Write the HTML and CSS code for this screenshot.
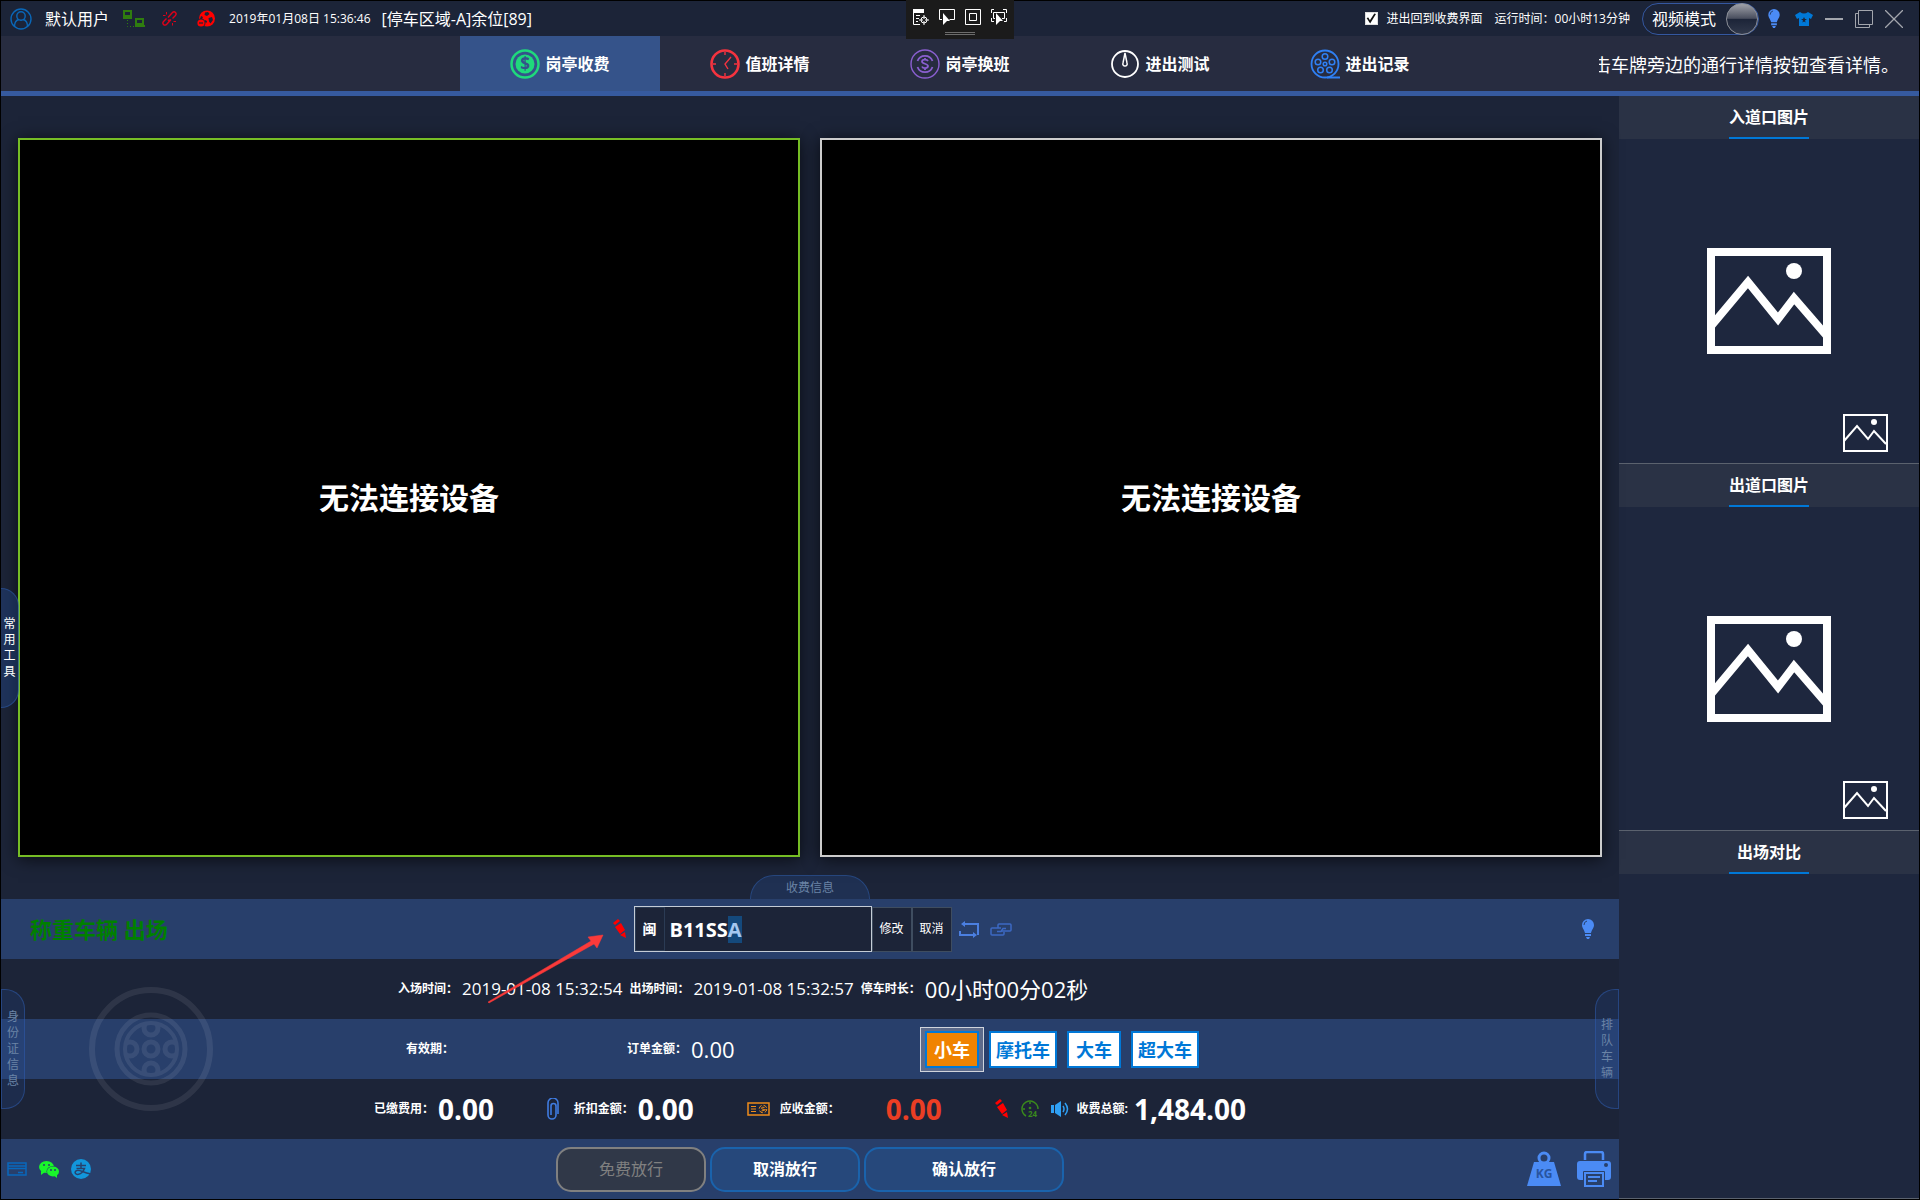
FILE: index.html
```html
<!DOCTYPE html>
<html lang="zh-CN">
<head>
<meta charset="utf-8">
<meta name="viewport" content="width=device-width, initial-scale=1">
<title>岗亭收费</title>
<link rel="stylesheet" href="styles.css">
</head>
<body>
<svg class="sprite" aria-hidden="true">
  <symbol id="pencil" viewBox="0 0 14 20">
    <path fill="red" d="M0 4 5 0 7 2 2 6zM2 8 8 4 12 11 7 15zM7 16 12 13 13 19z"/>
  </symbol>
  <symbol id="bulb" viewBox="0 0 14 20">
    <path fill="#4b8bf5" d="M7 0a6 6 0 0 1 6 6c0 3-2 4-3 8H4C3 10 1 9 1 6a6 6 0 0 1 6-6zM4 15h6v2H4zM5 18h4l-1 2H6z"/>
    <path fill="none" stroke="#28406b" d="M3 6a4 4 0 0 1 3-4"/>
  </symbol>
  <symbol id="picture" viewBox="0 0 124 106">
    <g fill="none" stroke="#fff" stroke-width="8"><path d="M4 4h116v98H4z"/><path d="M5 77 41 34 71 71 87 50 119 87"/></g>
    <circle cx="87" cy="23" r="8" fill="#fff"/>
  </symbol>
  <symbol id="picture-small" viewBox="0 0 45 38">
    <g fill="none" stroke="#fff" stroke-width="2"><path d="M1 1h43v36H1z"/><path d="M1 27 14 12 25 25 31 17 43 30"/></g>
    <circle cx="31" cy="8" r="3" fill="#fff"/>
  </symbol>
</svg>

<div class="window">
  <header class="titlebar">
    <div class="title-left">
      <svg class="ico-user" width="22" height="22" viewBox="0 0 22 22" fill="none" stroke="#0a67b8" stroke-width="1.4"><circle cx="11" cy="11" r="10"/><circle cx="11" cy="8" r="4.2"/><path d="M4.500 18.500c0-4 2-6.500 4.500-7M17.500 18.500c0-4-2-6.500-4.500-7"/></svg>
      <span class="text-lg">默认用户</span>
      <svg width="23" height="18" viewBox="0 0 23 18" fill="none" stroke="#2f7d0f" stroke-width="2"><path d="M2 1h7v5H2zM1 8h9M14 9h7v5h-7zM13 16h10"/><path stroke-dasharray="1 2" stroke-width="1" d="M5.500 10v6.500H12"/></svg>
      <svg class="ico-chain" width="15" height="15" viewBox="0 0 15 15" fill="none" stroke="#e00019" stroke-width="1.400"><path d="M6 6.500 10 2q2-2 3.500-.5T13 5l-2.500 2.500M9 8.500 5 13q-2 2-3.500.5T2 10l2.500-2.500M6 10l1.500-1.500"/><path stroke-width="1" d="M4.500 1v2.500M1 4.500h2.500M11.500 10.500H14M10.500 12v2.500"/></svg>
      <svg class="ico-globe" width="18" height="18" viewBox="0 0 18 18"><circle cx="10" cy="8.500" r="8" fill="red"/><path fill="#1c2438" d="M8 2.500 11 2l1.500 2L10 6 7.500 5zM11.500 8 15 7l1 3-2.500 3.500-1.500-2zM4 6l2 1-1 2H3zM8 10l2 1-.5 2L8 12z"/><circle cx="4" cy="13" r="4.500" fill="#1c2438"/><circle cx="4" cy="13" r="3.600" fill="red"/><path stroke="#1c2438" stroke-width="1.200" d="M2 13h4"/></svg>
      <time class="clock">2019年01月08日 15:36:46</time>
      <span class="text-lg">[停车区域-A]余位[89]</span>
    </div>
    <div class="title-right">
      <label class="back-option"><input type="checkbox" checked>进出回到收费界面</label>
      <span class="runtime">运行时间：00小时13分钟</span>
      <button class="mode-toggle" type="button">视频模式<span class="knob"></span></button>
      <div class="window-tools">
        <button type="button" aria-label="提示"><svg width="14" height="19"><use href="#bulb"/></svg></button>
        <button type="button" aria-label="皮肤"><svg width="18" height="14" viewBox="0 0 18 14"><path fill="#0078d7" d="M5 0q4 3 8 0l5 3-2 4-2-1v8H4V6L2 7 0 3z"/><path fill="#1c2438" d="m9 5 1 2h2l-2 1.500.6 2L9 9.500l-1.600 1 .6-2L6 7h2z"/></svg></button>
        <button type="button" aria-label="最小化"><svg width="18" height="18" viewBox="0 0 18 18"><path stroke="#a3a6ad" stroke-width="2" d="M0 9h18"/></svg></button>
        <button type="button" aria-label="还原"><svg width="18" height="18" viewBox="0 0 18 18" fill="none" stroke="#a3a6ad"><path d="M3.500.5h14v14h-14zM3.500 3.500h-3v14h14v-3"/></svg></button>
        <button type="button" aria-label="关闭"><svg width="18" height="18" viewBox="0 0 18 18"><path stroke="#a3a6ad" stroke-width="1.300" d="m0 0 18 18M18 0 0 18"/></svg></button>
      </div>
    </div>
  </header>

  <div class="inspector">
    <div class="inspector-icons">
      <svg width="16" height="16" viewBox="0 0 16 16" fill="none" stroke="#fff"><path fill="#fff" stroke="none" d="M0 0h11v4H0z"/><path d="M.5 0v15.500H7M3 6.500h4M3 9.500h3M3 12.500h2"/><circle cx="11" cy="11" r="3"/><path d="M11 6v4M11 12v4M6 11h4M12 11h4"/></svg>
      <svg width="16" height="16" viewBox="0 0 16 16" fill="none" stroke="#fff"><path d="M3 10.500H.5V.5h15v10h-5"/><path fill="#fff" stroke="none" d="m4 4 7 8H8l-4 4z"/></svg>
      <svg width="16" height="16" viewBox="0 0 16 16" fill="none" stroke="#fff"><path d="M.5.5h15v15H.5z M4.500 4.500h7v7h-7z"/></svg>
      <svg width="16" height="16" viewBox="0 0 16 16" fill="none" stroke="#fff"><path d="M3 .5H.5V4M12 .5h3.500V4M.5 9v3.500H3M15.500 9v3.500H13M4 9.500H2.500v-6h11v6H11"/><path fill="#fff" stroke="none" d="m5 4 7 8H9l-4 4z"/></svg>
    </div>
    <div class="inspector-grip"></div>
  </div>

  <nav class="navbar">
    <div class="nav-side"></div>
    <div class="tabs">
      <a class="tab active" href="#fee"><svg width="30" height="30" viewBox="0 0 30 30"><circle cx="15" cy="15" r="13.500" fill="none" stroke="#1fd97c" stroke-width="2.500"/><circle cx="15" cy="15" r="9.500" fill="#1fd97c"/><text class="coin" x="15" y="21" text-anchor="middle" fill="#35538a">$</text></svg>岗亭收费</a>
      <a class="tab" href="#duty"><svg width="30" height="30" viewBox="0 0 30 30" fill="none" stroke="#f5333f"><circle cx="15" cy="15" r="13.500" stroke-width="2.600"/><path stroke-width="1.400" d="M15 3v3M15 24v3M3 15h3M24 15h3M21 8l-6 7 3 5"/></svg>值班详情</a>
      <a class="tab" href="#shift"><svg width="30" height="30" viewBox="0 0 30 30" fill="none" stroke="#8a5fd0"><circle cx="15" cy="15" r="14" stroke-width="1.400"/><path stroke-width="1.800" d="M7.500 12a8 8 0 0 1 15 0M7.500 18a8 8 0 0 0 15 0M18 12c-1-2-6-2-6 .5s6 2 6 4.500-5 3-6 .5M15 9v2M15 19v2"/></svg>岗亭换班</a>
      <a class="tab" href="#test"><svg width="30" height="30" viewBox="0 0 30 30" fill="none" stroke="#fff"><circle cx="15" cy="15" r="13" stroke-width="1.800"/><path stroke-width="1.500" d="m15 4-2 10a2.200 2.200 0 1 0 4 0z"/></svg>进出测试</a>
      <a class="tab" href="#log"><svg width="30" height="30" viewBox="0 0 30 30" fill="none" stroke="#2f80f5" stroke-width="1.500"><circle cx="15" cy="15" r="13.500" stroke-width="1.800"/><circle cx="15" cy="7.500" r="2.800"/><circle cx="8" cy="13" r="2.800"/><circle cx="22" cy="13" r="2.800"/><circle cx="10.500" cy="21" r="2.800"/><circle cx="19.500" cy="21" r="2.800"/><circle cx="15" cy="15" r="1.800"/><path stroke-width="2" d="M17 28.500h13"/></svg>进出记录</a>
    </div>
    <div class="nav-side"><div class="marquee"><span>击车牌旁边的通行详情按钮查看详情。</span></div></div>
  </nav>

  <div class="body">
    <main class="main">
      <section class="videos">
        <div class="video selected">无法连接设备</div>
        <div class="video">无法连接设备</div>
        <button class="side-tab tools-tab" type="button">常用工具</button>
      </section>
      <button class="fee-tab" type="button">收费信息</button>

      <section class="panel" id="fee">
        <div class="row row-plate">
          <h1 class="status">称重车辆 出场</h1>
          <form class="plate-form">
            <svg width="14" height="20"><use href="#pencil"/></svg>
            <div class="plate">
              <div class="plate-box">
                <button type="button" class="province">闽</button>
                <input id="plate" type="text" value="B11SSA" aria-label="车牌号">
              </div>
              <button type="button" class="plate-btn">修改</button>
              <button type="button" class="plate-btn">取消</button>
            </div>
            <div class="plate-icons">
              <svg width="20" height="17" viewBox="0 0 20 17"><path fill="none" stroke="#4b7fe0" stroke-width="2" d="M1 10V14H15M5 3h14v9M19 10v4"/><path fill="#4b7fe0" d="M2 3l4-3v6zM18 14l-4-3v6z"/></svg>
              <svg width="22" height="13" viewBox="0 0 22 13" fill="none" stroke="#3c69c4" stroke-width="1.500"><path d="M8 5V2q0-1 1-1h11q1 0 1 1v5q0 1-1 1h-9"/><path d="M14 9v2q0 1-1 1H2q-1 0-1-1V6q0-1 1-1h9M7 8.500h4l2-3h3"/></svg>
            </div>
          </form>
          <svg class="row-bulb" width="14" height="20"><use href="#bulb"/></svg>
        </div>
        <div class="row">
          <dl class="info times">
            <div><dt>入场时间：</dt><dd>2019-01-08 15:32:54</dd></div>
            <div><dt>出场时间：</dt><dd>2019-01-08 15:32:57</dd></div>
            <div><dt>停车时长：</dt><dd class="big">00小时00分02秒</dd></div>
          </dl>
        </div>
        <div class="row alt">
          <div class="info order">
            <dl>
              <div><dt>有效期：</dt><dd></dd></div>
              <div><dt>订单金额：</dt><dd class="big">0.00</dd></div>
            </dl>
            <fieldset class="types">
              <label><input type="radio" name="type" checked><span>小车</span></label>
              <label><input type="radio" name="type"><span>摩托车</span></label>
              <label><input type="radio" name="type"><span>大车</span></label>
              <label><input type="radio" name="type"><span>超大车</span></label>
            </fieldset>
          </div>
        </div>
        <div class="row">
          <dl class="info fees">
            <div><dt>已缴费用：</dt><dd>0.00</dd></div>
            <div class="discount"><dt><svg width="12" height="22" viewBox="0 0 12 22" fill="none" stroke="#3f7be0" stroke-width="1.600"><path d="M11 16V5a5 5 0 0 0-10 0v12a4 4 0 0 0 8 0V8a2.500 2.500 0 0 0-5 0v9"/></svg>折扣金额：</dt><dd>0.00</dd></div>
            <div class="receivable"><dt><svg width="23" height="14" viewBox="0 0 23 14" fill="none" stroke="#f08c1a"><path stroke-width="1.500" d="M1 1h21v12H1z"/><path d="M4 4.500h5M4 7h5M4 9.500h5"/><circle cx="16" cy="7" r="3.800" stroke-dasharray="4 2"/><path d="M17.500 5.500q-3-1-3 .5t3 1.500-3 1.500"/></svg>应收金额：</dt><dd class="due">0.00</dd></div>
            <div class="total"><dt>
              <svg width="14" height="20"><use href="#pencil"/></svg>
              <svg width="18" height="18" viewBox="0 0 18 18" fill="none" stroke="#3a8a1c" stroke-width="1.500"><path d="M5 16A8 8 0 1 1 17 9M9 2v2M2 9h2"/><circle cx="9" cy="8" r=".6"/><text class="hours" x="7" y="17" fill="#3a8a1c" stroke="none">24</text></svg>
              <svg width="18" height="18" viewBox="0 0 18 18"><path fill="#2fa0f5" d="M0 5h3v8H0zM4 5l6-4v16l-6-4z"/><path fill="none" stroke="#2fa0f5" stroke-width="1.500" d="M12 6q2 3 0 6M14 3q5 6 0 12"/></svg>
              收费总额:</dt><dd>1,484.00</dd></div>
          </dl>
        </div>
        <div class="row alt row-actions">
          <div class="pay-icons">
            <svg width="20" height="14" viewBox="0 0 20 14" fill="none" stroke="#0868bd" stroke-width="1.500"><path d="M1 1h18v12H1zM1 4h18M1 6.500h18M11 10.500h5"/></svg>
            <svg width="20" height="17" viewBox="0 0 20 17"><g fill="#19f52b"><ellipse cx="7.500" cy="6" rx="7.500" ry="6"/><path d="M2 10 2 14 6 11z"/></g><ellipse cx="14" cy="10.500" rx="6.500" ry="5.500" fill="#28406b"/><g fill="#19f52b"><ellipse cx="14" cy="10.500" rx="6" ry="5"/><path d="M14 14h4v3z"/></g><g fill="#28406b"><circle cx="5" cy="4" r="1"/><circle cx="10" cy="4" r="1"/><circle cx="12" cy="9" r="1"/><circle cx="16" cy="9" r="1"/></g></svg>
            <svg width="20" height="20" viewBox="0 0 20 20"><circle cx="10" cy="10" r="10" fill="#1296db"/><path fill="none" stroke="#28406b" stroke-width="1.500" d="M5 6.500h10M10 3.500v5.500M5.500 9.500h8q-2 5-6 5.800c-3 .5-4.500-2-2.500-3.500 3-2 7 2 14 3"/></svg>
          </div>
          <div class="actions">
            <button type="button" disabled>免费放行</button>
            <button type="button">取消放行</button>
            <button type="button" class="wide">确认放行</button>
          </div>
          <div class="device-icons">
            <svg width="34" height="36" viewBox="0 0 34 36"><circle cx="17" cy="7" r="5" fill="none" stroke="#4b8bf5" stroke-width="3"/><path fill="#4b8bf5" d="M7 11h20l7 24H0z"/><text class="kg" x="17" y="27" text-anchor="middle" fill="#28549f">KG</text></svg>
            <svg width="34" height="36" viewBox="0 0 34 36"><path fill="none" stroke="#4b8bf5" stroke-width="2.500" d="M8 9V3q0-2 2-2h14q2 0 2 2v6"/><rect y="10" width="34" height="19" rx="3" fill="#4b8bf5"/><circle cx="29" cy="14" r="2" fill="#28406b"/><path fill="#28406b" stroke="#4b8bf5" stroke-width="2" d="M8 22h18v13H8z"/><path stroke="#28406b" d="M6.500 30v-9.500h21V30" fill="none"/><path stroke="#4b8bf5" stroke-width="2" d="M11 26h12M11 30h9"/></svg>
          </div>
        </div>

        <svg class="tire" width="124" height="124" viewBox="0 0 124 124" fill="none" stroke="#fff" stroke-width="6">
          <clipPath id="rim"><circle cx="62" cy="62" r="27"/></clipPath>
          <circle cx="62" cy="62" r="59"/><circle cx="62" cy="62" r="34" stroke-width="5"/><circle cx="62" cy="62" r="26" stroke-width="4"/><circle cx="62" cy="62" r="7" stroke-width="5"/>
          <g clip-path="url(#rim)" stroke-width="5"><circle cx="62" cy="41" r="7"/><circle cx="62" cy="83" r="7"/><circle cx="41" cy="62" r="7"/><circle cx="83" cy="62" r="7"/></g>
        </svg>
        <svg class="arrow" width="116" height="70" viewBox="0 0 116 70"><path fill="#fb3a3a" stroke="#fb3a3a" stroke-width=".5" d="M1 69 0 68 103 7 100 3 115 1 109 14 106 10z"/></svg>
        <button class="side-tab id-tab" type="button">身份证信息</button>
        <button class="side-tab queue-tab" type="button">排队车辆</button>
      </section>
    </main>

    <aside class="sidebar">
      <section><h2><span>入道口图片</span></h2>
        <div class="shot"><svg class="shot-main" width="124" height="106"><use href="#picture"/></svg><svg class="shot-thumb" width="45" height="38"><use href="#picture-small"/></svg></div></section>
      <section><h2><span>出道口图片</span></h2>
        <div class="shot"><svg class="shot-main" width="124" height="106"><use href="#picture"/></svg><svg class="shot-thumb" width="45" height="38"><use href="#picture-small"/></svg></div></section>
      <section><h2><span>出场对比</span></h2><div class="shot"></div></section>
    </aside>
  </div>
</div>
<script src="script.js"></script>
</body>
</html>
```
FILE: styles.css
```css
* { box-sizing: border-box; }

body, h1, h2, dl, dd, fieldset { margin: 0; padding: 0; }

body {
  background: #000;
  color: #fff;
  font: 12px/16px "Open Sans", "Noto Sans CJK SC", sans-serif;
}

button, input { font: inherit; color: inherit; }
button { margin: 0; padding: 0; border: 0; background: none; cursor: pointer; }
fieldset { border: 0; }
svg { display: block; flex: none; }
.sprite { position: absolute; width: 0; height: 0; }

.window {
  position: relative;
  display: flex;
  flex-direction: column;
  min-height: 100vh;
  border: 1px solid #000;
  background: #1c2438;
}

/* Title bar */
.titlebar { display: flex; justify-content: space-between; height: 35px; padding: 0 16px 0 8px; white-space: nowrap; }
.title-left, .title-right { display: flex; align-items: center; }
.text-lg { font-size: 16px; line-height: 24px; }
.title-left { gap: 13px; }
.ico-user { margin-left: 1px; }
.ico-chain { margin: 0 4px; }
.ico-globe { margin: 0 1px 0 3px; }
.clock { margin-right: -2px; }
.title-right { gap: 12px; }
.back-option { display: flex; align-items: center; gap: 9px; }
.back-option input {
  appearance: none;
  width: 13px;
  height: 13px;
  margin: 0;
  border: 1px solid #ddd;
  background: #fff;
}
.back-option input:checked::before {
  content: "";
  display: block;
  width: 11px;
  height: 11px;
  background: #111;
  clip-path: polygon(10% 45%, 25% 40%, 40% 65%, 80% 5%, 95% 10%, 42% 95%);
}
.mode-toggle {
  display: flex;
  align-items: center;
  gap: 10px;
  height: 32px;
  padding-left: 9px;
  border: 1px solid #3457a0;
  border-radius: 16px;
  font-size: 16px;
}
.knob {
  width: 32px;
  height: 32px;
  border: 1px solid #8c8f98;
  border-radius: 50%;
  background: linear-gradient(#a0a2a9, #494e5e 48%, #1c2438 50%, #30384b);
}
.window-tools { display: flex; align-items: center; gap: 12px; margin-left: -4px; }
.window-tools button:first-child { margin-right: 2px; }

/* Floating inspector bar */
.inspector {
  position: absolute;
  top: -1px;
  left: 50%;
  width: 108px;
  height: 39px;
  margin-left: -54px;
  padding: 9px 7px 0;
  background: #1b1b1b;
}
.inspector-icons { display: flex; gap: 10px; }
.inspector-grip { width: 30px; height: 3px; margin: 7px auto 0; border: solid #6c6c6c; border-width: 1px 0; }

/* Navigation */
.navbar {
  display: grid;
  grid-template-columns: 1fr minmax(0, 1000px) 1fr;
  height: 60px;
  border-bottom: 5px solid #365a9f;
  background: #272c40;
}
.tabs { display: flex; }
.tab {
  display: flex;
  flex: 1;
  align-items: center;
  justify-content: center;
  gap: 5px;
  color: #fff;
  font-size: 16px;
  font-weight: bold;
  text-decoration: none;
  white-space: nowrap;
}
.tab.active { background: #35538a; }
.coin { font-size: 17px; font-weight: bold; }
.nav-side { display: flex; align-items: center; justify-content: flex-end; padding: 2px 20px 0 0; }
.marquee { display: flex; justify-content: flex-end; width: 300px; overflow: hidden; font-size: 18px; line-height: 26px; white-space: nowrap; }

/* Body */
.body { display: flex; flex: 1; }
.main { display: flex; flex: 1; flex-direction: column; min-width: 0; }

.videos { position: relative; display: flex; flex: 1; gap: 20px; padding: 42px 17px 18px; }
.video {
  display: flex;
  flex: 1;
  align-items: center;
  justify-content: center;
  border: 2px solid #ccc;
  background: #000;
  box-shadow: 0 2px 16px #000a;
  font-size: 30px;
  font-weight: bold;
  line-height: 40px;
}
.video.selected { border-color: #76bd25; }

.fee-tab {
  align-self: center;
  width: 120px;
  height: 24px;
  border: 1px solid #27477f;
  border-bottom: 0;
  border-radius: 24px 24px 0 0;
  background: #1f3052;
  color: #6b84a6;
}

.side-tab {
  position: absolute;
  display: flex;
  align-items: center;
  justify-content: center;
  width: 24px;
  height: 120px;
  padding: 0 5px;
  border: 1px solid #2e5cac88;
  border-radius: 0 20px 20px 0;
  background: #2451a033;
  color: #6b84a6;
  line-height: 16px;
  word-break: break-all;
}
.tools-tab { bottom: 167px; left: 0; width: 18px; padding: 0 2px; border-left: 0; border-radius: 0 18px 18px 0; background: #2451a055; color: #fff; }
.id-tab { top: 90px; left: 0; }
.queue-tab { top: 90px; right: 0; border-radius: 20px 0 0 20px; }

/* Charge panel */
.panel { position: relative; }
.row { display: flex; align-items: center; justify-content: center; height: 60px; white-space: nowrap; }
.row.alt { background: #283f6b; }
.row-plate, .row-actions { display: grid; grid-template-columns: 1fr auto 1fr; }
.row-plate { background: #283f6b; }
.status { padding-left: 29px; color: #008000; font-size: 22px; line-height: 30px; }
.row-bulb { justify-self: end; margin-right: 24px; }
.plate-form { display: flex; align-items: center; gap: 7px; padding-left: 4px; }
.plate { display: flex; align-items: center; }
.plate-box { display: flex; width: 238px; height: 46px; border: 1px solid #c4ccd6; background: #1c2438; }
.province { width: 30px; border: 1px solid #2b3b54; font-size: 14px; font-weight: bold; }
.plate-box input {
  flex: 1;
  min-width: 0;
  padding: 0 5px;
  border: 0;
  outline: 0;
  background: none;
  font-size: 20px;
  font-weight: bold;
}
.plate-box input::selection { background: #14497c; color: #a5c8f0; }
.plate-btn { width: 40px; height: 45px; border: 1px solid #3f4d60; background: #1c2438; }
.plate-icons { display: flex; align-items: center; gap: 11px; }

.info { display: flex; align-items: center; width: 872px; }
.info dl { display: flex; }
.info dl > div, dl.info > div { display: flex; align-items: center; }
dt { display: flex; align-items: center; font-weight: bold; }
.times { gap: 7px; padding-left: 24px; }
.times dt, .order dt { margin-right: 4px; }
.times dd { font-size: 17px; line-height: 24px; }
.times dd.big, .order dd.big { font-size: 22px; line-height: 32px; }
.order { justify-content: space-between; padding: 0 42px 0 32px; }
.order dl { gap: 169px; }

.types { display: flex; }
.types label { position: relative; padding: 3px 4px; border: 1px solid transparent; cursor: pointer; }
.types label:has(:checked) { border-color: #d0d4dc; background: #5d6b8b; }
.types input { position: absolute; inset: 0; margin: 0; opacity: 0; }
.types span {
  display: block;
  min-width: 54px;
  padding: 4px 5px 3px;
  border: 2px solid #0078d7;
  background: #fff;
  color: #0078d7;
  font-size: 18px;
  font-weight: bold;
  line-height: 26px;
  text-align: center;
}
.types input:checked + span { background: #f08300; color: #fff; }

.fees { justify-content: space-between; }
.fees dt svg { margin-right: 12px; }
.fees .discount svg { margin-right: 15px; }
.fees .receivable svg { margin-right: 10px; }
.fees dd { margin-left: 4px; font-size: 28px; font-weight: bold; line-height: 38px; }
.fees .due { margin-left: 46px; color: #ea3e24; }
.fees .total dd { margin-left: 6px; }
.fees .total dt svg + svg + svg { margin-right: 8px; }

.hours { font-size: 8px; font-weight: bold; }
.kg { font-size: 12px; font-weight: bold; }

.pay-icons, .device-icons { display: flex; align-items: center; }
.pay-icons { gap: 12px; padding-left: 6px; }
.device-icons { gap: 16px; justify-content: flex-end; padding-right: 8px; }
.actions { display: flex; gap: 4px; }
.actions button {
  width: 150px;
  height: 45px;
  border: 2px solid #1a63ac;
  border-radius: 15px;
  background: #26487b;
  font-size: 16px;
  font-weight: bold;
}
.actions .wide { width: 200px; }
.actions button:disabled { border-color: #808080; background: #303848; color: #808080; font-weight: normal; }

.tire { position: absolute; top: 88px; left: 88px; opacity: .08; }
.arrow { position: absolute; top: 35px; left: 50%; margin-left: -322px; pointer-events: none; }

/* Captured pictures */
.sidebar { display: flex; flex-direction: column; width: 300px; background: #1e273e; }
.sidebar section { display: flex; flex: 1; flex-direction: column; border-bottom: 1px solid #5b626e; }
.sidebar h2 { display: flex; justify-content: center; height: 43px; background: #2a3245; font-size: 16px; line-height: 43px; }
.sidebar h2 span { width: 80px; border-bottom: 2px solid #0078d7; text-align: center; }
.shot { display: grid; flex: 1; }
.shot svg { grid-area: 1 / 1; }
.shot-main { place-self: center; }
.shot-thumb { place-self: end; margin: 0 31px 11px 0; }
```
FILE: script.js
```js
// Keep the last plate character selected, ready for correction.
const plate = document.getElementById('plate');
plate.focus();
plate.setSelectionRange(5, 6);
```
